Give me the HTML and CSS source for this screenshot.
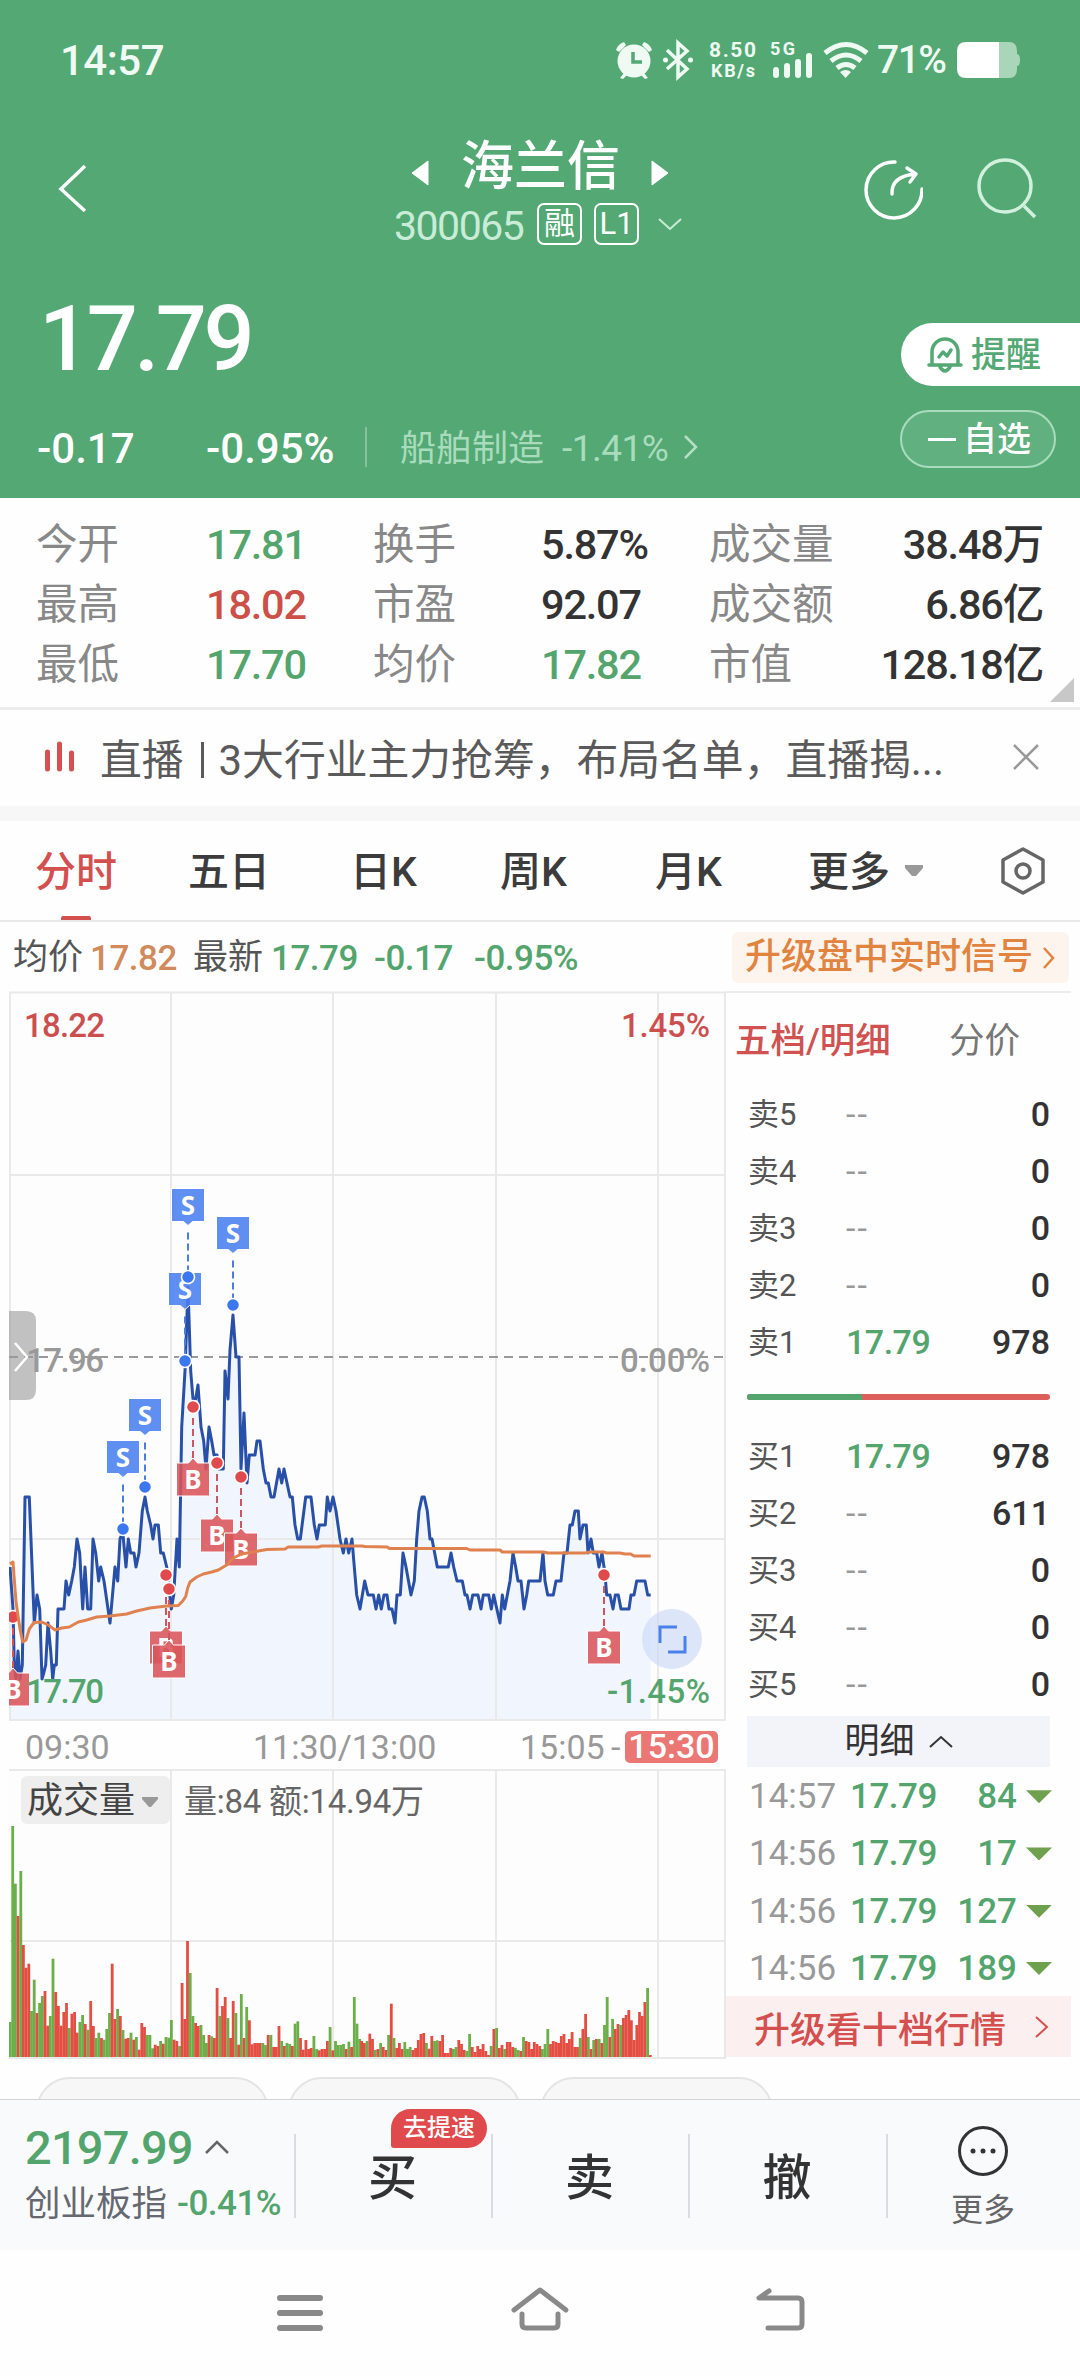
FILE: index.html
```html
<!DOCTYPE html>
<html lang="zh-CN">

<head>
  <meta charset="utf-8">
  <link rel="stylesheet" href="styles.css">
  <title>海兰信 300065</title>
</head>
<body>
  <div class="header">
    <div class="status">
      <span class="clock">14:57</span>
      <svg class="status-icons" width="200" height="44" viewBox="612 38 200 44">
        <g fill="#eefaf2">
          <circle cx="634" cy="61" r="16.5"/>
          <path d="M616 50q2-6 8-8l2 3-7 7zM652 50q-2-6-8-8l-2 3 7 7zM620 78l4-5 3 2-4 4zM648 78l-4-5-3 2 4 4z"/>
          <circle cx="665.500" cy="60" r="2.500"/>
          <circle cx="690.500" cy="60" r="2.500"/>
          <rect x="773" y="67" width="6" height="11" rx="3"/>
          <rect x="784" y="63" width="6" height="15" rx="3"/>
          <rect x="795" y="59" width="6" height="19" rx="3"/>
          <rect x="806" y="53" width="6" height="25" rx="3"/>
          <text class="net" x="709" y="57" textLength="47">8.50</text>
          <text class="net unit" x="711" y="77" textLength="44">KB/s</text>
          <text class="net unit" x="770" y="55" textLength="25">5G</text>
        </g>
        <path d="M633 52v10h9" fill="none" stroke="#53a874" stroke-width="3.500"/>
        <path d="M667 50l20 19-9 8V43l9 8-20 18" fill="none" stroke="#eefaf2" stroke-width="3.500"/>
      </svg>
      <svg class="wifi" width="46" height="38" viewBox="823 41 46 38">
        <g fill="none" stroke="#eefaf2" stroke-width="5">
          <path d="M825 53q21-17 42 0"/>
          <path d="M831 61q15-12 30 0"/>
          <path d="M837 68q9-7 18 0"/>
        </g>
        <path d="M840 72q6-4 11 0l-5.500 6z" fill="#eefaf2"/>
      </svg>
      <span class="percent">71%</span>
      <svg class="battery" width="64" height="36" viewBox="0 0 64 36">
        <path d="M42 0h10q8 0 8 9v3q3 0 3 6t-3 6v3q0 9-8 9H42z" fill="#a9d5b9"/>
        <path d="M42 0H9Q0 0 0 9v18q0 9 9 9h33z" fill="#fff"/>
      </svg>
    </div>

    <div class="title-bar">
      <svg class="back" width="32" height="52" viewBox="0 0 32 52"><path d="M28 4L4 27l24 22" fill="none" stroke="#fff" stroke-width="3.500"/></svg>
      <div class="title">
        <div class="name-row">
          <svg width="18" height="26" viewBox="0 0 18 26"><path d="M17 1v24L1 13z" fill="#fff" stroke="#fff" stroke-linejoin="round"/></svg>
          <span class="name">海兰信</span>
          <svg width="18" height="26" viewBox="0 0 18 26"><path d="M1 1v24l16-12z" fill="#fff" stroke="#fff" stroke-linejoin="round"/></svg>
        </div>
        <div class="code-row">
          <span class="code">300065</span>
          <span class="tag">融</span>
          <span class="tag tag-level">L1</span>
          <svg width="26" height="14" viewBox="0 0 26 14"><path d="M2 2l11 10L24 2" fill="none" stroke="#c9ecd7" stroke-width="2"/></svg>
        </div>
      </div>
      <svg class="share" width="60" height="62" viewBox="863 158 60 62">
        <g fill="none" stroke="#fff" stroke-width="3.500" stroke-linecap="round" stroke-linejoin="round">
          <path d="M895 162a28 28 0 1 0 27 27"/>
          <path d="M892 194q-1-18 24-20M907 168l9 6-6 8"/>
        </g>
      </svg>
      <svg class="search" width="62" height="62" viewBox="976 157 62 62">
        <g fill="none" stroke="#d2f0de" stroke-width="3.500">
          <circle cx="1005" cy="186" r="26"/>
          <path d="M1024 206l11 11"/>
        </g>
      </svg>
    </div>

    <div class="price">17.79</div>
    <div class="change-row">
      <span class="num">-0.17</span>
      <span class="num">-0.95%</span>
      <i class="divider"></i>
      <span class="sector">船舶制造</span>
      <span class="sector sector-num">-1.41%</span>
      <svg width="16" height="26" viewBox="0 0 16 26"><path d="M2 2l11 11L2 24" fill="none" stroke="#b5dfc5" stroke-width="2.500"/></svg>
    </div>

    <div class="remind">
      <svg width="36" height="38" viewBox="0 0 36 38">
        <g fill="none" stroke="#53a874" stroke-width="3.500" stroke-linecap="round" stroke-linejoin="round">
          <path d="M2 29h32M5 28V16a13 13 0 0 1 26 0v12M13 31q5 8 10 0"/>
          <path d="M12 21l4-5 4 4 4-6"/>
        </g>
      </svg>
      <span>提醒</span>
    </div>
    <div class="favorite"><i></i><span>自选</span></div>
  </div>

  <div class="quotes">
    <span>今开</span><b class="green">17.81</b><span>换手</span><b>5.87%</b><span>成交量</span><b class="right">38.48万</b>
    <span>最高</span><b class="red">18.02</b><span>市盈</span><b>92.07</b><span>成交额</span><b class="right">6.86亿</b>
    <span>最低</span><b class="green">17.70</b><span>均价</span><b class="green">17.82</b><span>市值</span><b class="right">128.18亿</b>
    <svg class="corner" width="24" height="24" viewBox="0 0 24 24"><path d="M24 0v24H0z" fill="#c8c8c8"/></svg>
  </div>

  <div class="notice">
    <svg width="32" height="32" viewBox="0 0 32 32"><path d="M4.500 11v17M16.500 3v25M28.500 12v16" stroke="#d94f4d" stroke-width="5" stroke-linecap="round"/></svg>
    <span class="notice-text">直播<i></i>3大行业主力抢筹，布局名单，直播揭...</span>
    <svg width="28" height="28" viewBox="0 0 28 28"><path d="M2 2l24 24M26 2L2 26" stroke="#999" stroke-width="2.500"/></svg>
  </div>

  <div class="tabs">
    <span class="active">分时</span>
    <span>五日</span>
    <span>日K</span>
    <span>周K</span>
    <span>月K</span>
    <span>更多</span>
    <svg width="20" height="13" viewBox="0 0 20 13"><path d="M1 1h18v3l-7 8H8L1 4z" fill="#999"/></svg>
    <svg width="46" height="50" viewBox="0 0 46 50">
      <g fill="none" stroke="#666" stroke-width="3.500" stroke-linejoin="round">
        <path d="M23 3l20 11v22L23 47 3 36V14z"/>
        <circle cx="23" cy="25" r="7"/>
      </g>
    </svg>
  </div>

  <div class="info">
    <span>均价</span><b class="orange">17.82</b>
    <span>最新</span><b class="green">17.79</b>
    <b class="green">-0.17</b><b class="green">-0.95%</b>
    <div class="upgrade">升级盘中实时信号<svg width="14" height="24" viewBox="0 0 14 24"><path d="M2 2l9 10-9 10" fill="none" stroke="#e08440" stroke-width="2.500"/></svg></div>
  </div>

  <div class="main">
    <div class="charts">
      <svg class="price-chart" width="717" height="730" viewBox="9 991 717 730">
        <rect x="9" y="991" width="717" height="730" fill="#fdfdfd"/>
        <path class="area" id="price-area"/>
        <path class="grid" d="M9 992.500h717M10 1175h716M10 1539h716M9 1720h717M10 992v728M171 992v728M333 992v728M496 992v728M658 992v728M725 992v728"/>
        <path class="zero" d="M9 1357h716"/>
        <path class="price-line" id="price-line"/>
        <g id="markers"></g>
        <path class="average-line" id="average-line"/>
        <text class="scale up" x="24" y="1037" textLength="81">18.22</text>
        <text class="scale up" x="621" y="1037" textLength="89">1.45%</text>
        <text class="scale flat" x="26" y="1372" textLength="78">17.96</text>
        <text class="scale flat" x="620" y="1372" textLength="90">0.00%</text>
        <text class="scale down" x="26" y="1703" textLength="78">17.70</text>
        <text class="scale down" x="607" y="1703" textLength="103">-1.45%</text>
        <path d="M9 1311h17q10 0 10 10v69q0 10-10 10H9z" fill="#999" opacity=".6"/>
        <path d="M15 1343l12 14-12 14" fill="none" stroke="#fff" stroke-width="2.500"/>
        <circle cx="672" cy="1639" r="30" fill="#ccdaf8" opacity=".65"/>
        <path d="M660 1643v-16h17M668 1652h17v-16" fill="none" stroke="#4a80ea" stroke-width="3"/>
      </svg>
      <div class="time-axis">
        <span>09:30</span>
        <span>11:30/13:00</span>
        <span>15:05</span>
        <span>-</span>
        <span class="after-hours">15:30</span>
      </div>
      <svg class="volume-chart" width="717" height="290" viewBox="9 1769 717 290">
        <rect x="9" y="1769" width="717" height="290" fill="#fdfdfd"/>
        <path class="grid" d="M9 1770h717M10 1941h716M9 2058h717M171 1770v288M333 1770v288M496 1770v288M658 1770v288M725 1770v288"/>
        <g id="volume-bars"></g>
        <rect x="21" y="1776" width="149" height="48" rx="6" fill="#eee"/>
        <text class="volume-label" x="27" y="1813">成交量</text>
        <path d="M142 1797h16v2l-7 8h-2l-7-8z" fill="#999"/>
        <text class="volume-info" x="184" y="1813" textLength="240">量:84 额:14.94万</text>
      </svg>
    </div>

    <div class="book">
      <div class="book-tabs"><span class="active">五档/明细</span><span>分价</span></div>
      <div class="level"><span>卖5</span><i>--</i><b>0</b></div>
      <div class="level"><span>卖4</span><i>--</i><b>0</b></div>
      <div class="level"><span>卖3</span><i>--</i><b>0</b></div>
      <div class="level"><span>卖2</span><i>--</i><b>0</b></div>
      <div class="level"><span>卖1</span><i class="green">17.79</i><b>978</b></div>
      <div class="ratio"><i></i></div>
      <div class="level"><span>买1</span><i class="green">17.79</i><b>978</b></div>
      <div class="level"><span>买2</span><i>--</i><b>611</b></div>
      <div class="level"><span>买3</span><i>--</i><b>0</b></div>
      <div class="level"><span>买4</span><i>--</i><b>0</b></div>
      <div class="level"><span>买5</span><i>--</i><b>0</b></div>
      <div class="detail-title">明细<svg width="24" height="14" viewBox="0 0 24 14"><path d="M1 12L12 2l11 10" fill="none" stroke="#333" stroke-width="2"/></svg></div>
      <div class="trade"><span>14:57</span><i>17.79</i><b>84</b><em></em></div>
      <div class="trade"><span>14:56</span><i>17.79</i><b>17</b><em></em></div>
      <div class="trade"><span>14:56</span><i>17.79</i><b>127</b><em></em></div>
      <div class="trade"><span>14:56</span><i>17.79</i><b>189</b><em></em></div>
      <div class="ten-levels">升级看十档行情<svg width="14" height="24" viewBox="0 0 14 24"><path d="M1 2l11 10L1 22" fill="none" stroke="#d94f4d" stroke-width="2"/></svg></div>
    </div>
  </div>

  <div class="chips"><i></i><i></i><i></i></div>

  <div class="trade-bar">
    <div class="index">
      <div class="index-value"><span>2197.99</span><svg width="24" height="15" viewBox="0 0 24 15"><path d="M1 13L12 2l11 11" fill="none" stroke="#666" stroke-width="2.500"/></svg></div>
      <div class="index-name"><span>创业板指</span><b>-0.41%</b></div>
    </div>
    <div class="action">买<span class="badge">去提速</span></div>
    <div class="action">卖</div>
    <div class="action">撤</div>
    <div class="more">
      <svg width="52" height="52" viewBox="0 0 52 52">
        <circle cx="26" cy="26" r="23.500" fill="none" stroke="#333" stroke-width="3"/>
        <g fill="#333"><circle cx="16" cy="26" r="2.500"/><circle cx="26" cy="26" r="2.500"/><circle cx="36" cy="26" r="2.500"/></g>
      </svg>
      <span>更多</span>
    </div>
  </div>

  <div class="nav">
    <svg width="1080" height="126" viewBox="0 2250 1080 126">
      <g fill="none" stroke="#898989" stroke-linecap="round" stroke-linejoin="round" stroke-width="5">
        <path d="M280 2298h40M280 2313h40M280 2328h40" stroke-width="6"/>
        <path d="M514 2310l26-20 26 20M522 2314v10q0 4 4 4h28q4 0 4-4v-10"/>
        <path d="M769 2291l-10 7h39q4 0 4 4v22q0 4-4 4h-30"/>
      </g>
    </svg>
  </div>

  <script src="chart.js"></script>
</body>

</html>
```
FILE: styles.css
```css
* {
  box-sizing: border-box;
}

body {
  margin: 0;
  width: 1080px;
  height: 2376px;
  overflow: hidden;
  background: #fefefe;
  color: #333;
  font-family: Roboto, "Noto Sans CJK SC", sans-serif;
}

i, em {
  font-style: normal;
}

b {
  font-weight: normal;
}

svg {
  display: block;
}

.green {
  color: #53a56d !important;
}

.red {
  color: #cc4f48 !important;
}

.orange {
  color: #d08a5c;
}

/* Header */
.header {
  position: relative;
  height: 498px;
  background: #53a874;
  color: #fff;
}

.status {
  display: flex;
  align-items: center;
  height: 120px;
  padding-left: 60px;
}

.clock {
  width: 552px;
  font-size: 42px;
  font-weight: 500;
  letter-spacing: -0.5px;
  color: #f0faf4;
}

.net {
  font-size: 21px;
  font-weight: bold;
}

.unit {
  font-size: 18px;
}

.wifi {
  margin-left: 11px;
}

.percent {
  width: 88px;
  padding-left: 8px;
  font-size: 39px;
  font-weight: 500;
  letter-spacing: -1.5px;
  color: #eefaf2;
}

.title-bar {
  display: grid;
  grid-template-columns: 57px 337px 469px 113px 1fr;
  height: 135px;
}

.back {
  grid-column: 2;
  margin-top: 42px;
}

.title {
  width: 292px;
}

.name-row {
  display: flex;
  align-items: center;
  height: 81px;
  padding-left: 17px;
}

.name {
  margin: 12px 31px 0 32px;
  font-size: 53px;
  line-height: 80px;
  font-weight: 500;
}

.name-row svg {
  margin-top: 24px;
}

.code-row {
  display: flex;
  align-items: center;
  height: 46px;
}

.code {
  width: 143px;
  padding-top: 3px;
  font-size: 41px;
  letter-spacing: -1.5px;
  color: #c9ecd7;
}

.tag {
  width: 45px;
  height: 42px;
  margin-right: 12px;
  border: 2px solid #fff;
  border-radius: 7px;
  font-size: 31px;
  line-height: 38px;
  text-align: center;
}

.tag-level {
  margin-right: 18px;
  line-height: 38px;
}

.share {
  margin-top: 38px;
}

.search {
  margin-top: 37px;
}

.price {
  height: 160px;
  padding: 31px 0 0 39px;
  font-size: 90px;
  line-height: 108px;
  font-weight: 500;
  letter-spacing: -3.5px;
}

.change-row {
  display: grid;
  grid-template-columns: 169px 159px 35px 162px 121px 20px;
  align-items: center;
  height: 64px;
  padding-left: 37px;
  white-space: nowrap;
}

.num {
  padding-top: 3px;
  font-size: 42px;
  font-weight: 500;
}

.divider {
  width: 2px;
  height: 40px;
  background: #86c29c;
}

.sector {
  padding-top: 4px;
  color: #a9dcbd;
  font-size: 36px;
  line-height: 50px;
}

.sector-num {
  padding-top: 3px;
  font-size: 37px;
  letter-spacing: -0.5px;
}

.remind {
  position: absolute;
  top: 323px;
  right: 0;
  display: flex;
  align-items: center;
  width: 179px;
  height: 63px;
  padding-left: 26px;
  border-radius: 32px 0 0 32px;
  background: #fff;
  color: #53a874;
  font-size: 35px;
  font-weight: 500;
}

.remind span {
  margin-left: 8px;
  padding-top: 3px;
  line-height: 60px;
}

.favorite {
  position: absolute;
  top: 410px;
  left: 900px;
  display: flex;
  align-items: center;
  width: 156px;
  height: 58px;
  padding-left: 26px;
  border: 2px solid #a9dcbd;
  border-radius: 30px;
  background: #61b080;
  font-size: 34px;
  line-height: 56px;
  font-weight: 500;
}

.favorite i {
  width: 28px;
  height: 3px;
  margin-right: 7px;
  background: #fff;
}

/* Quotes */
.quotes {
  position: relative;
  display: grid;
  grid-template-columns: 170px 167px 168px 168px 130px 204px;
  grid-template-rows: repeat(3, 60px);
  align-items: center;
  height: 212px;
  padding: 17px 0 0 36px;
  border-bottom: 3px solid #ececec;
  font-size: 41.500px;
  line-height: 60px;
  white-space: nowrap;
}

.quotes span {
  color: #888;
}

.quotes b {
  font-weight: 500;
  letter-spacing: -1.2px;
}

.quotes .right {
  text-align: right;
}

.corner {
  position: absolute;
  right: 6px;
  bottom: 5px;
}

/* Notice */
.notice {
  display: grid;
  grid-template-columns: 57px 912px 28px;
  align-items: center;
  height: 111px;
  padding: 0 0 2px 43px;
  border-bottom: 15px solid #f7f7f7;
  color: #5a5a5a;
  font-size: 41.800px;
  white-space: nowrap;
}

.notice-text i {
  display: inline-block;
  width: 3px;
  height: 36px;
  margin: 0 15px 0 17px;
  background: #5a5a5a;
  vertical-align: -3px;
}

/* Tabs */
.tabs {
  display: grid;
  grid-template-columns: 153px 162px 150px 155px 153px 96px 96px 46px;
  align-items: center;
  height: 101px;
  padding-left: 35px;
  border-bottom: 2px solid #e8e8e8;
  font-size: 41px;
  line-height: 96px;
  font-weight: 500;
  color: #3c3c3c;
}

.tabs span {
  padding-top: 3px;
}

.tabs .active {
  position: relative;
  color: #d4504f;
}

.tabs .active::after {
  content: "";
  position: absolute;
  left: 26px;
  bottom: 0;
  width: 30px;
  height: 4px;
  border-radius: 2px 2px 0 0;
  background: #d4504f;
}

.info {
  display: grid;
  grid-template-columns: 77px 103px 78px 103px 100px 258px 337px;
  align-items: center;
  height: 69px;
  padding: 2px 0 0 13px;
  color: #555;
  font-size: 35px;
  line-height: 50px;
  white-space: nowrap;
}

.info b {
  padding-top: 2px;
  font-weight: 500;
  letter-spacing: -0.5px;
}

.upgrade {
  display: flex;
  align-items: center;
  justify-content: space-between;
  height: 51px;
  padding: 0 13px;
  border-radius: 6px;
  background: #fdf4ed;
  color: #e08440;
  font-size: 36px;
  line-height: 51px;
  font-weight: 500;
}

/* Charts */
.main {
  display: flex;
  height: 1068px;
  padding-left: 9px;
}

.grid {
  fill: none;
  stroke: #e9e9e9;
  stroke-width: 2;
}

.area {
  fill: #f0f5fe;
}

.zero {
  stroke: #999;
  stroke-width: 2;
  stroke-dasharray: 9 6;
}

.price-line {
  fill: none;
  stroke: #2850a8;
  stroke-width: 3;
  stroke-linejoin: round;
}

.average-line {
  fill: none;
  stroke: #e0824f;
  stroke-width: 3;
  stroke-linejoin: round;
}

.scale {
  font-size: 33px;
  font-weight: 500;
}

.up {
  fill: #cc4f50;
}

.down {
  fill: #53a56d;
}

.flat {
  fill: #999;
}

.flag-letter {
  font: bold 26px "Noto Sans", sans-serif;
  fill: #fff;
  text-anchor: middle;
}

.time-axis {
  display: grid;
  grid-template-columns: 228px 267px 91px 14px 93px;
  align-items: center;
  height: 48px;
  padding: 3px 0 0 16px;
  color: #999;
  font-size: 34px;
  white-space: nowrap;
}

.after-hours {
  height: 32px;
  border-radius: 5px;
  background: #eb7774;
  color: #fff;
  font-weight: 500;
  line-height: 31px;
  text-align: center;
}

.volume-label {
  font-size: 36px;
  fill: #444;
}

.volume-info {
  font-size: 33px;
  fill: #666;
}

/* Order book */
.book {
  width: 345px;
  border-top: 2px solid #ececec;
}

.book-tabs {
  display: flex;
  justify-content: space-between;
  height: 93px;
  padding: 0 51px 0 9px;
  font-size: 35.500px;
  line-height: 96px;
  color: #777;
}

.book-tabs .active {
  color: #cf5251;
  font-weight: 500;
}

.level {
  display: grid;
  grid-template-columns: 98px 80px 124px;
  align-items: center;
  height: 57px;
  padding-left: 22px;
  font-size: 31px;
  line-height: 57px;
  color: #555;
}

.level i {
  color: #999;
  font-size: 34px;
  letter-spacing: 2px;
}

.level .green {
  font-weight: 500;
  letter-spacing: -0.5px;
}

.level b {
  text-align: right;
  color: #333;
  font-size: 34px;
  font-weight: 500;
}

.ratio {
  width: 303px;
  height: 6px;
  margin: 23px 0 28px 21px;
  border-radius: 3px;
  background: #dd5f5b;
  overflow: hidden;
}

.ratio i {
  display: block;
  width: 115px;
  height: 6px;
  background: #53a56d;
}

.detail-title {
  display: flex;
  align-items: center;
  justify-content: center;
  width: 303px;
  height: 51px;
  margin: 3px 0 0 21px;
  background: #f3f4f9;
  font-size: 35px;
  line-height: 51px;
}

.detail-title svg {
  margin-left: 14px;
}

.trade {
  display: grid;
  grid-template-columns: 100px 80px 110px 36px;
  align-items: center;
  height: 57.250px;
  padding: 2px 0 0 23px;
  color: #53a56d;
  font-size: 35px;
  font-weight: 500;
}

.trade span {
  color: #999;
  font-weight: normal;
}

.trade i {
  padding-left: 1px;
  letter-spacing: -0.5px;
}

.trade b {
  width: 136px;
  margin-left: -26px;
  padding-right: 22px;
  font-weight: 500;
  text-align: right;
}

.trade em {
  width: 26px;
  height: 13px;
  margin-left: -13px;
  background: #6fa04d;
  clip-path: polygon(0 0, 100% 0, 50% 100%);
}

.ten-levels {
  display: flex;
  align-items: center;
  justify-content: space-between;
  height: 61px;
  padding: 1px 22px 0 28px;
  background: #fcefef;
  color: #d4504f;
  font-size: 36px;
  font-weight: 500;
}

/* Chips cut off by the trade bar */
.chips {
  display: flex;
  gap: 19px;
  height: 40px;
  padding: 18px 0 0 36px;
  overflow: hidden;
}

.chips i {
  width: 233px;
  height: 68px;
  border: 2px solid #e4e4e4;
  border-radius: 34px;
  background: #f7f7f7;
}

/* Trade bar */
.trade-bar {
  display: grid;
  grid-template-columns: 294px 197px 197px 198px 194px;
  height: 151px;
  border-top: 1px solid #d4d4d4;
  background: #f9fafc;
}

.index {
  padding: 18px 0 0 25px;
  white-space: nowrap;
}

.index-value {
  display: flex;
  align-items: center;
  height: 58px;
  font-size: 47px;
  font-weight: 500;
  letter-spacing: -0.8px;
  color: #53a56d;
}

.index-value span {
  width: 180px;
}

.index-name {
  display: flex;
  align-items: center;
  height: 56px;
  font-size: 35.500px;
  line-height: 56px;
  color: #666870;
}

.index-name b {
  margin-left: 10px;
  font-size: 35px;
  font-weight: 500;
  letter-spacing: -0.5px;
  color: #53a56d;
}

.action {
  position: relative;
  font-size: 49px;
  font-weight: 500;
  line-height: 158px;
  text-align: center;
}

.action::before, .more::before {
  content: "";
  position: absolute;
  left: 0;
  top: 34px;
  width: 2px;
  height: 84px;
  background: #dcdce0;
}

.badge {
  position: absolute;
  left: 97px;
  top: 9px;
  width: 96px;
  height: 39px;
  border-radius: 20px 20px 20px 3px;
  background: #e04a4c;
  color: #fff;
  font-size: 24px;
  line-height: 38px;
}

.more {
  position: relative;
  display: flex;
  flex-direction: column;
  align-items: center;
  padding-top: 25px;
  font-size: 32px;
  line-height: 66px;
  color: #666;
}
```
FILE: chart.js
```js
// Prices: x in 1/3 px, then ticks (0.01) below the previous close
var morning = [
  30,15, 39,18, 43,22, 48,23, 54,21, 60,23, 67,22, 75,10, 88,10, 103,19, 111,17, 119,18, 126,23, 132,22.5, 137,22,
  144,19, 152,21, 158,23, 163,22, 169,22, 174,18, 192,18, 198,16, 206,17, 215,16, 223,15, 231,13, 239,14, 248,18,
  255,15, 263,18, 272,18, 279,13, 287,14, 296,16, 302,15, 312,16, 330,19, 345,15, 353,16, 360,13, 368,12.5, 378,15,
  385,13, 392,14, 402,14, 408,15, 417,14, 427,11, 435,10, 442,11, 452,12, 459,13, 465,12, 475,12, 482,14, 490,14,
  500,15, 507,16.5, 514,18, 521,17, 531,13, 538,15, 545,5, 555,1, 564,-5, 572,1, 579,3, 587,3, 594,2, 603,5,
  611,6, 618,8, 627,5, 635,6, 642,7, 651,7, 657,8, 670,8, 675,1, 684,3, 690,-0.5, 699,-3, 708,0, 717,0, 723,8,
  732,4, 741,9, 748,7, 765,7, 771,6, 780,6, 790,8, 798,9, 805,9, 813,10, 822,10, 837,8, 845,9, 852,8, 861,9,
  870,10, 877,10, 885,12, 893,13, 901,13, 917,10, 933,10, 943,12, 951,13, 958,12, 976,12, 982,10, 990,11, 999,10,
  1008,11, 1020,13
];
var afternoon = [
  10,14, 18,13, 26,14, 36,13, 43,15, 50,17, 60,18, 74,16, 84,17, 100,17, 108,18, 116,17, 124,18, 132,17, 141,17,
  147,18, 156,18, 165,19, 171,17, 181,17, 189,14, 198,15, 213,17, 223,16, 230,13, 237,11, 246,10, 253,10, 262,11,
  270,13, 276,13, 292,15, 325,15, 333,14, 341,15, 351,16, 367,16, 375,17, 381,17, 390,18, 398,17, 414,17, 423,18,
  430,17, 446,17, 454,18, 461,17, 480,19, 487,17, 494,18, 502,17, 510,16, 519,14, 527,15, 534,16, 543,16, 552,18,
  560,17, 566,16, 600,16, 609,14, 615,16, 623,17, 640,17, 648,16, 663,16, 672,14, 681,14, 690,12, 697,12, 705,11,
  715,11, 720,13, 729,12, 739,12, 744,14, 753,13, 760,14, 770,14, 777,15, 786,14, 795,15.5, 800,17, 810,17, 819,18,
  826,17, 835,17, 843,18, 867,18, 873,17, 882,17, 890,16, 915,16, 923,17, 932,17
];

// Average price: x in 1/3 px, y in px
var average = [
  30,1564, 39,1562, 48,1602, 60,1629, 68,1642, 78,1640, 88,1629, 102,1622.5, 125,1622, 145,1625, 165,1630, 185,1628,
  208,1627, 235,1622, 260,1620, 290,1617, 330,1616, 380,1614, 410,1611, 450,1608, 500,1606, 535,1605.5, 548,1601,
  557,1596.5, 563,1588, 570,1582, 590,1577, 610,1574, 635,1572, 655,1570, 680,1565, 700,1558, 725,1554, 775,1551,
  800,1549.5, 855,1549, 865,1547, 955,1547, 965,1546, 1085,1546, 1095,1546.5, 1162,1547, 1168,1548.5, 1400,1548.5,
  1410,1550, 1500,1550, 1507,1552, 1630,1552, 1645,1553, 1755,1553, 1770,1552, 1810,1552, 1820,1553, 1860,1553,
  1875,1554, 1892,1554, 1902,1556, 1952,1556
];

function toPoints(list, dx, toY) {
  var points = [];
  for (var i = 0; i < list.length; i += 2) {
    points.push(((list[i] + dx) / 3).toFixed(1) + " " + toY(list[i + 1]).toFixed(1));
  }
  return points;
}

function tickY(t) { return 1357 + t * 14; }
function same(y) { return y; }

var line = toPoints(morning, 0, tickY).concat(toPoints(afternoon, 1020, tickY)).join("L");
document.getElementById("price-line").setAttribute("d", "M" + line);
document.getElementById("price-area").setAttribute("d", "M10 1720L" + line + "V1720z");
document.getElementById("average-line").setAttribute("d", "M" + toPoints(average, 0, same).join("L"));

// Buy and sell marks: type, x, y of the dot
var marks = [
  ["S", 185, 1361], ["S", 188, 1277], ["S", 233, 1305], ["S", 145, 1487], ["S", 123, 1529],
  ["B", 193, 1407], ["B", 217, 1463], ["B", 241, 1477], ["B", 166, 1575], ["B", 169, 1589],
  ["B", 13, 1617], ["B", 604, 1575]
];
var html = "";
marks.forEach(function (m) {
  var sell = m[0] == "S", x = m[1], y = m[2];
  var top = sell ? y - 88.5 : y + 56;
  var color = sell ? "#4a80f0" : "#d9545a";
  var flag = sell
    ? "M" + (x - 16.5) + " " + top + "h33v33h-12l-4.500 4-4.500-4h-12z"
    : "M" + (x - 16.5) + " " + top + "h12l4.500-5 4.500 5h12v33h-33z";
  var from = sell ? top + 44 : y + 11;
  var to = sell ? y - 7 : top - 5;
  html += '<path d="M' + x + " " + from + "V" + to + '" stroke="' + (sell ? "#4a7de0" : "#cf5560") + '" stroke-width="2" stroke-dasharray="7 4"/>';
  html += '<path d="' + flag + '" fill="' + color + '" fill-opacity=".88" stroke="#fff"/>';
  html += '<text class="flag-letter" x="' + x + '" y="' + (top + 26) + '">' + m[0] + "</text>";
  html += '<circle cx="' + x + '" cy="' + y + '" r="6.500" fill="' + (sell ? "#3b78ef" : "#e04a4c") + '" stroke="#fff" stroke-width="1.500"/>';
});
document.getElementById("markers").innerHTML = html;

// Volume bars: colour and height in 1/3 px
var bars1 = "g105 g693 g520 r423 g558 r336 r268 r280 g138 g232 r132 g162 g183 r198 r94 g123 g295 r195 r153 r94 r135 r162 g87 r130 r135 r73 g105 g126 r99 g82 r168 r93 g57 g73 r57 g52 g84 g132 r280 r114 g144 r123 g81 r55 r57 g73 r52 g60 r22 r102 r90 g66 g66 g26 r37 r33 g48 r40 g60 g58 g111 r52 r48 g33 r222 r114 r348 g252 g123 r102 r93 g96 g66 g42 r66 g62 r57 r207 g123 r153 r180 g117 r57 r168 g132 r37 g189 r57 g150 r110 r38 r42 r42 r42 g42 g36 r66 g66 r30 r30 r93 g48 r33 g42 g39 r33 g100 g107 r57 r22 r51 r24 r27 g63 g24 r20 r24 r24 r48 g90 r20 g48 g36 g36 g39 r24 g46 r30 g180 g100 g54";
var bars2 = "r48 r42 g48 r70 r54 g21 r24 g42 r30 r21 g66 r160 g57 r27 r42 r24 g45 g24 g30 r21 r27 r51 r69 r72 g42 r25 r63 g48 g50 r48 r66 r12 r12 r27 g24 g30 r51 r39 r21 g18 g69 r30 r15 r33 r24 r39 r18 r6 g33 r84 g87 r27 r36 g24 r45 r45 r30 g27 g21 r18 g60 r48 r45 r24 r45 r39 r33 g24 g39 g84 r39 r48 r45 r42 r63 r69 r42 r54 r75 r30 r30 g57 r84 r129 g60 r24 g51 r54 g54 r42 g96 g180 r60 g114 r84 r99 g96 r117 r126 r141 r110 r51 r96 r135 r123 r165 g207 r6";

function drawBars(text, start, end) {
  var list = text.split(" ");
  var step = (end - start) / (list.length - 1);
  return list.map(function (bar, i) {
    var h = bar.slice(1) / 3;
    var x = (start + i * step) / 3;
    var fill = bar[0] == "g" ? "#6cae49" : "#e44d42";
    return '<rect x="' + (x - 1.4).toFixed(1) + '" y="' + (2057 - h).toFixed(1) + '" width="2.800" height="' + h.toFixed(1) + '" fill="' + fill + '"/>';
  }).join("");
}
document.getElementById("volume-bars").innerHTML = drawBars(bars1, 30, 1079) + drawBars(bars2, 1085, 1951);
```
